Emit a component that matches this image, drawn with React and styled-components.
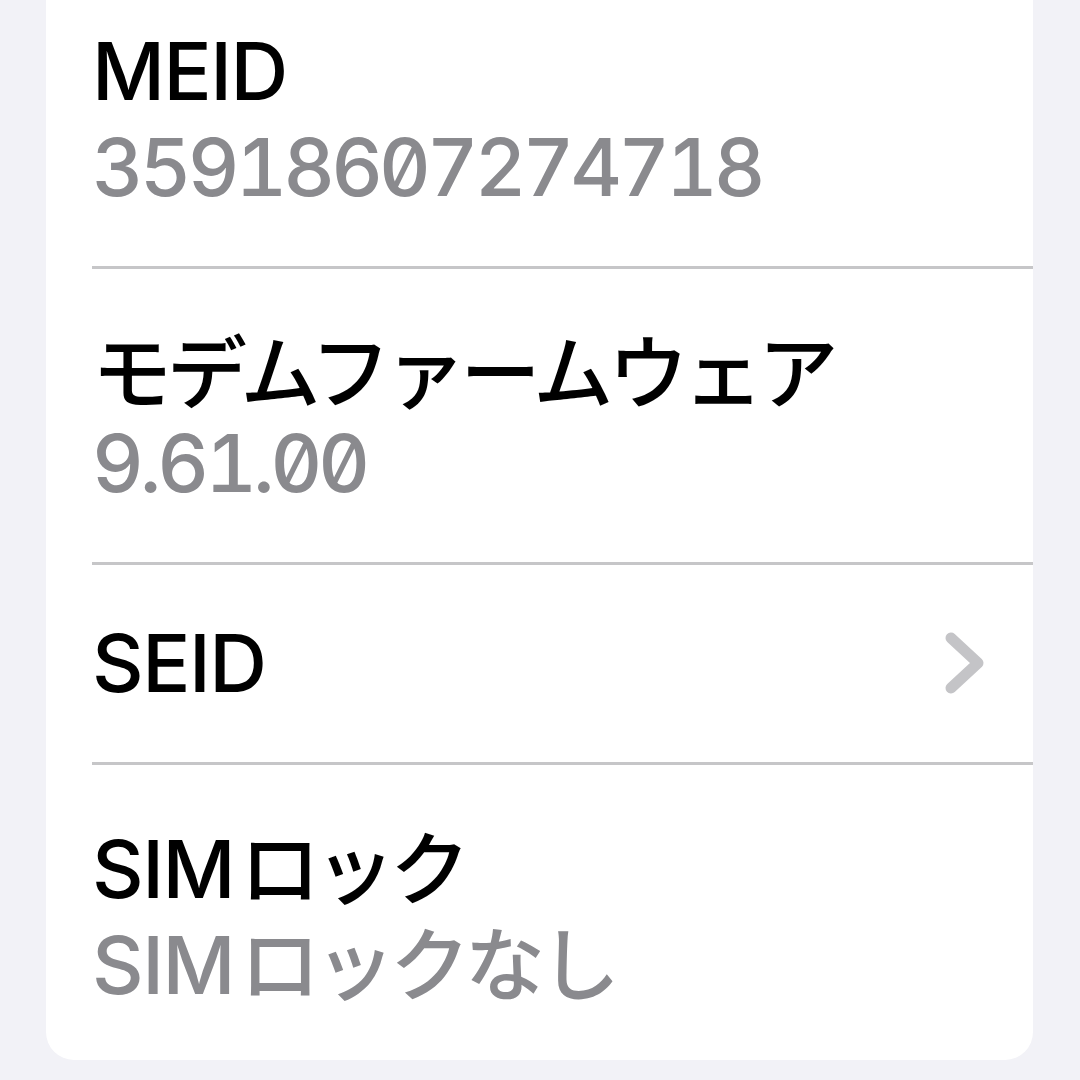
import React from "react";
import styled, { createGlobalStyle } from "styled-components";

const GlobalStyle = createGlobalStyle`
  html, body {
    margin: 0;
    padding: 0;
    background: #f2f2f7;
  }
`;

const Page = styled.div`
  height: 1080px;
  overflow: hidden;
  display: flex;
  flex-direction: column;
  justify-content: flex-end;
  padding: 0 47px 20px 46px;
  box-sizing: border-box;
  background: #f2f2f7;
  font-family: Inter, "Noto Sans CJK JP", sans-serif;
`;

const Card = styled.div`
  background: #ffffff;
  border-radius: 0 0 28px 28px;
  padding-left: 46px;
  flex-shrink: 0;
`;

const Row = styled.div`
  display: flex;
  align-items: center;
  padding: 50px 0 ${(p) => (p.$last ? "53px" : "51px")} 0;
  border-bottom: ${(p) => (p.$last ? "none" : "3px solid #c6c6c8")};
`;

const TextBlock = styled.div`
  flex: 1;
  display: flex;
  flex-direction: column;
`;

const Line = styled.div`
  height: 96px;
  font-size: 80px;
  line-height: 96px;
  font-weight: 500;
  color: ${(p) => (p.$secondary ? "#8a8a8e" : "#000000")};
  white-space: nowrap;
`;

const Latin = styled.span`
  letter-spacing: ${(p) => (p.$numeric ? "-4px" : "-1.5px")};
  font-feature-settings: "zero" 1, "tnum" ${(p) => (p.$numeric ? 1 : 0)};
`;

const Kana = styled.span`
  font-family: "Noto Sans CJK JP", sans-serif;
  letter-spacing: -5px;
  margin-left: ${(p) => (p.$afterLatin ? "6px" : "0")};
`;

const Chevron = styled.svg`
  width: 48px;
  height: 66px;
  margin-right: 44px;
  flex-shrink: 0;
`;

// split a string into latin and japanese runs so each gets its own tracking
function Runs({ text }) {
  const parts = text.match(/[\x00-\x7f]+|[^\x00-\x7f]+/g) || [];
  return parts.map((part, i) =>
    /^[\x00-\x7f]/.test(part) ? (
      <Latin key={i} $numeric={/^[\d.]+$/.test(part)}>
        {part}
      </Latin>
    ) : (
      <Kana key={i} $afterLatin={i > 0}>
        {part}
      </Kana>
    )
  );
}

const rows = [
  { label: "MEID", value: "35918607274718" },
  { label: "モデムファームウェア", value: "9.61.00" },
  { label: "SEID", link: true },
  { label: "SIMロック", value: "SIMロックなし" },
];

export default function App() {
  return (
    <>
      <GlobalStyle />
      <Page>
        <Card>
          {rows.map((r, i) => (
            <Row key={r.label} $last={i === rows.length - 1}>
              <TextBlock>
                <Line>
                  <Runs text={r.label} />
                </Line>
                {r.value && (
                  <Line $secondary>
                    <Runs text={r.value} />
                  </Line>
                )}
              </TextBlock>
              {r.link && (
                <Chevron viewBox="0 0 48 66">
                  <path
                    d="M10 8 L37 33 L10 58"
                    fill="none"
                    stroke="#c4c4c7"
                    strokeWidth="11"
                    strokeLinecap="round"
                    strokeLinejoin="round"
                  />
                </Chevron>
              )}
            </Row>
          ))}
        </Card>
      </Page>
    </>
  );
}
